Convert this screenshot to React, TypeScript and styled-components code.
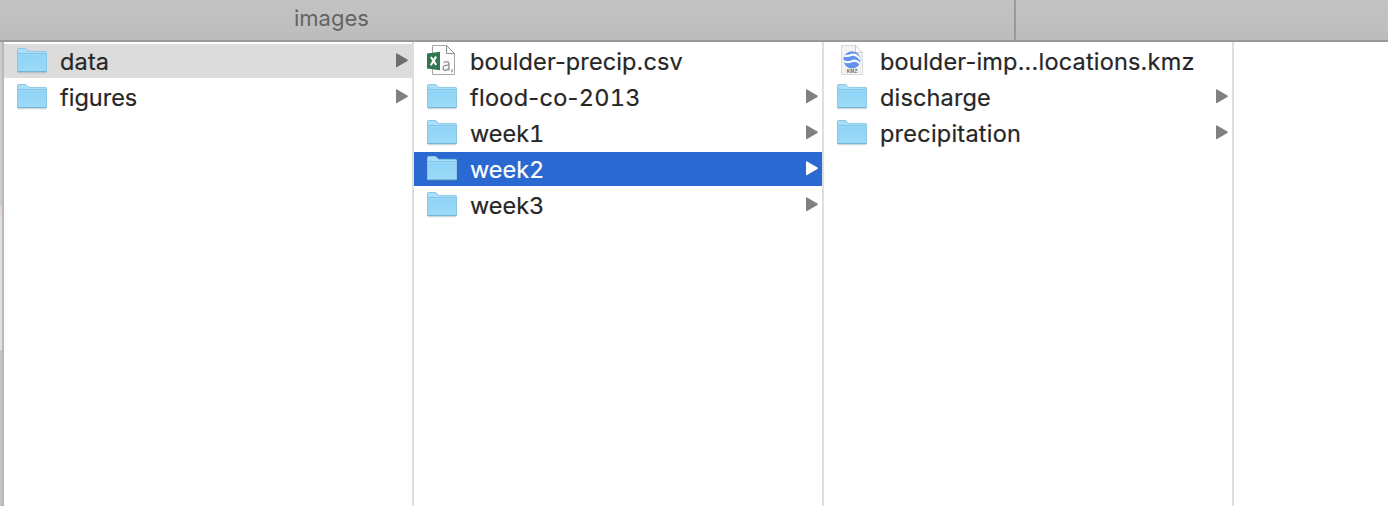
import React from 'react';
import styled, { createGlobalStyle } from 'styled-components';

const GlobalStyle = createGlobalStyle`
  body { margin: 0; background: #fff; }
  *, *::before, *::after { box-sizing: border-box; }
`;

const Window = styled.div`
  width: 1388px;
  height: 506px;
  display: flex;
  flex-direction: column;
  overflow: hidden;
  background: #fff;
  color: #262626;
  font-family: Inter, 'Liberation Sans', sans-serif;
`;

const Toolbar = styled.header`
  flex: none;
  display: flex;
  height: 42px;
  border-bottom: 2px solid #999;
  background: linear-gradient(#c2c2c2, #c0c0c1 50%, #bcbcbc);
`;

const ToolbarTitle = styled.div`
  width: 1016px;
  padding: 4px 0 0 294px;
  border-right: 2px solid #999;
  font-size: 22px;
  line-height: 28px;
  color: #646464;
`;

const Browser = styled.main`
  flex: 1;
  display: flex;
`;

const Backdrop = styled.div`
  width: 4px;
  border-right: 2px solid #b9b9b9;
  background: linear-gradient(
    #cdcdcd 164px, #e3d3d3 164px, #e3d8d8 173px,
    #e1e1e1 175px, #e1e1e1 308px, #c4c4c4 308px
  );
`;

const Column = styled.ul`
  width: 410px;
  margin: 0;
  padding: 2px 0 0;
  list-style: none;
  display: flex;
  flex-direction: column;
  gap: 2px;
  border-right: 2px solid #dfdfdf;
`;

type Highlight = 'path' | 'active';

const Row = styled.li<{ $highlight?: Highlight }>`
  height: 34px;
  display: flex;
  align-items: center;
  padding: 0 4px 0 12px;
  background: ${({ $highlight }) =>
    $highlight === 'active' ? '#2969d1' : $highlight === 'path' ? '#dcdcdc' : 'transparent'};
  color: ${({ $highlight }) => ($highlight === 'active' ? '#fff' : '#262626')};
`;

const IconSlot = styled.span`
  flex: none;
  width: 32px;
  height: 34px;
  margin-right: 12px;
  svg { display: block; }
`;

const Name = styled.span<{ $tracking: number }>`
  flex: 1;
  padding-top: 2px;
  white-space: nowrap;
  font-size: 23.5px;
  line-height: 34px;
  letter-spacing: ${({ $tracking }) => $tracking}px;
  -webkit-text-stroke: 0.2px currentColor;
`;

const Digits = styled.span`
  font-variant-numeric: tabular-nums;
`;

const Arrow = styled.svg<{ $highlight?: Highlight }>`
  flex: none;
  display: block;
  fill: ${({ $highlight }) =>
    $highlight === 'active' ? '#fff' : $highlight === 'path' ? '#6f6f6f' : '#808080'};
`;

const FolderIcon = () => (
  <svg width="32" height="34" viewBox="0 0 32 34">
    <defs>
      <linearGradient id="folderFront" x1="0" y1="0" x2="0" y2="1">
        <stop offset="0" stopColor="#8ed3f6" />
        <stop offset="1" stopColor="#9cdaf8" />
      </linearGradient>
    </defs>
    <path d="M1.5 28.8H30.5" stroke="#000" strokeOpacity=".16" />
    <path d="M1.5 27V5.5Q1.5 4.5 2.5 4.5H9.2Q10 4.5 10.6 5.2L12 6.7Q12.6 7.4 13.5 7.4H29.5Q30.5 7.4 30.5 8.4V27Q30.5 27.8 29.7 27.8H2.3Q1.5 27.8 1.5 27Z" fill="#a9def8" stroke="#8cc6e2" />
    <path d="M2 9.5H30V27H2Z" fill="url(#folderFront)" />
    <path d="M2 9.5H30" stroke="#7fc5e8" />
    <path d="M2 10.5H30" stroke="#9edaf7" />
    <path d="M1.5 27.5H30.5" stroke="#78b5d3" />
  </svg>
);

const CsvIcon = () => (
  <svg width="32" height="34" viewBox="0 0 32 34">
    <path d="M6.5 1.5H20.5L28.5 9.5V30.5H6.5Z" fill="#fdfdfd" stroke="#a6a6a6" />
    <path d="M20.5 1.5V9.5H28.5Z" fill="#fafafa" stroke="#8e8e8e" />
    <path d="M1 9.5L14 7.8V26.2L1 24.4Z" fill="#2f7651" />
    <path d="M4.9 13L10.2 20.9M10.1 12.6L4.8 21.2" stroke="#fff" strokeWidth="2.1" fill="none" />
    <path d="M17.7 19Q18.4 17.6 20.4 17.6Q23 17.6 23 20.2V26.6M23 21.2Q17.1 20.7 17.1 24Q17.1 26.2 19.3 26.2Q22.2 26.2 23 23.6M26.3 25.2Q26.4 27.2 25.4 28.4" stroke="#949494" strokeWidth="1.35" fill="none" />
  </svg>
);

const KmzLabel = styled.text`
  font-family: 'Liberation Sans', sans-serif;
  font-size: 4.8px;
  font-weight: 700;
  fill: #6c6c6c;
`;

const KmzIcon = () => (
  <svg width="32" height="34" viewBox="0 0 32 34">
    <defs>
      <clipPath id="globe"><circle cx="16" cy="15.8" r="8.6" /></clipPath>
    </defs>
    <path d="M5.5 1.5H19.5L26.5 8.5V30.5H5.5Z" fill="#f3f3f3" stroke="#dadada" />
    <path d="M19.5 1.5V8.5H26.5Z" fill="#fff" stroke="#cbcbcb" />
    <g clipPath="url(#globe)">
      <path d="M7 7H25V25H7Z" fill="#6292ea" />
      <path d="M6 10.8Q10 13 14.2 11.2Q20 9 26 17" fill="none" stroke="#fafcff" strokeWidth="2.2" />
      <path d="M6 16.3Q11 19.6 15.6 17.3Q20.5 14.8 26 21.6" fill="none" stroke="#fafcff" strokeWidth="2" />
    </g>
    <KmzLabel x="10.8" y="28.9" textLength="10.6" lengthAdjust="spacingAndGlyphs">KMZ</KmzLabel>
  </svg>
);

type Kind = 'folder' | 'csv' | 'kmz';

interface Entry {
  name: string;
  kind: Kind;
  tracking?: number;
  highlight?: Highlight;
}

const icons: Record<Kind, React.FC> = { folder: FolderIcon, csv: CsvIcon, kmz: KmzIcon };

const columns: Entry[][] = [
  [
    { name: 'data', kind: 'folder', highlight: 'path', tracking: 0.15 },
    { name: 'figures', kind: 'folder' },
  ],
  [
    { name: 'boulder-precip.csv', kind: 'csv', tracking: 0.12 },
    { name: 'flood-co-2013', kind: 'folder', tracking: 0.28 },
    { name: 'week1', kind: 'folder' },
    { name: 'week2', kind: 'folder', highlight: 'active' },
    { name: 'week3', kind: 'folder' },
  ],
  [
    { name: 'boulder-imp...locations.kmz', kind: 'kmz', tracking: 0.19 },
    { name: 'discharge', kind: 'folder', tracking: 0.15 },
    { name: 'precipitation', kind: 'folder', tracking: 0.23 },
  ],
];

const FileRow = ({ name, kind, tracking = 0, highlight }: Entry) => {
  const Icon = icons[kind];
  const [, stem, digits] = name.match(/^(.*?)(\d*)$/)!;
  return (
    <Row $highlight={highlight}>
      <IconSlot><Icon /></IconSlot>
      <Name $tracking={tracking}>{stem}{digits && <Digits>{digits}</Digits>}</Name>
      {kind === 'folder' && (
        <Arrow $highlight={highlight} width="12" height="34" viewBox="0 0 12 34">
          <path d="M0 10Q0 8.8 1.1 9.4L11.4 15.5Q12.4 16.2 11.4 16.9L1.1 23Q0 23.6 0 22.4Z" />
        </Arrow>
      )}
    </Row>
  );
};

export default function App() {
  return (
    <>
      <GlobalStyle />
      <Window>
        <Toolbar><ToolbarTitle>images</ToolbarTitle></Toolbar>
        <Browser>
          <Backdrop />
          {columns.map((entries, i) => (
            <Column key={i}>
              {entries.map((entry) => <FileRow key={entry.name} {...entry} />)}
            </Column>
          ))}
        </Browser>
      </Window>
    </>
  );
}
